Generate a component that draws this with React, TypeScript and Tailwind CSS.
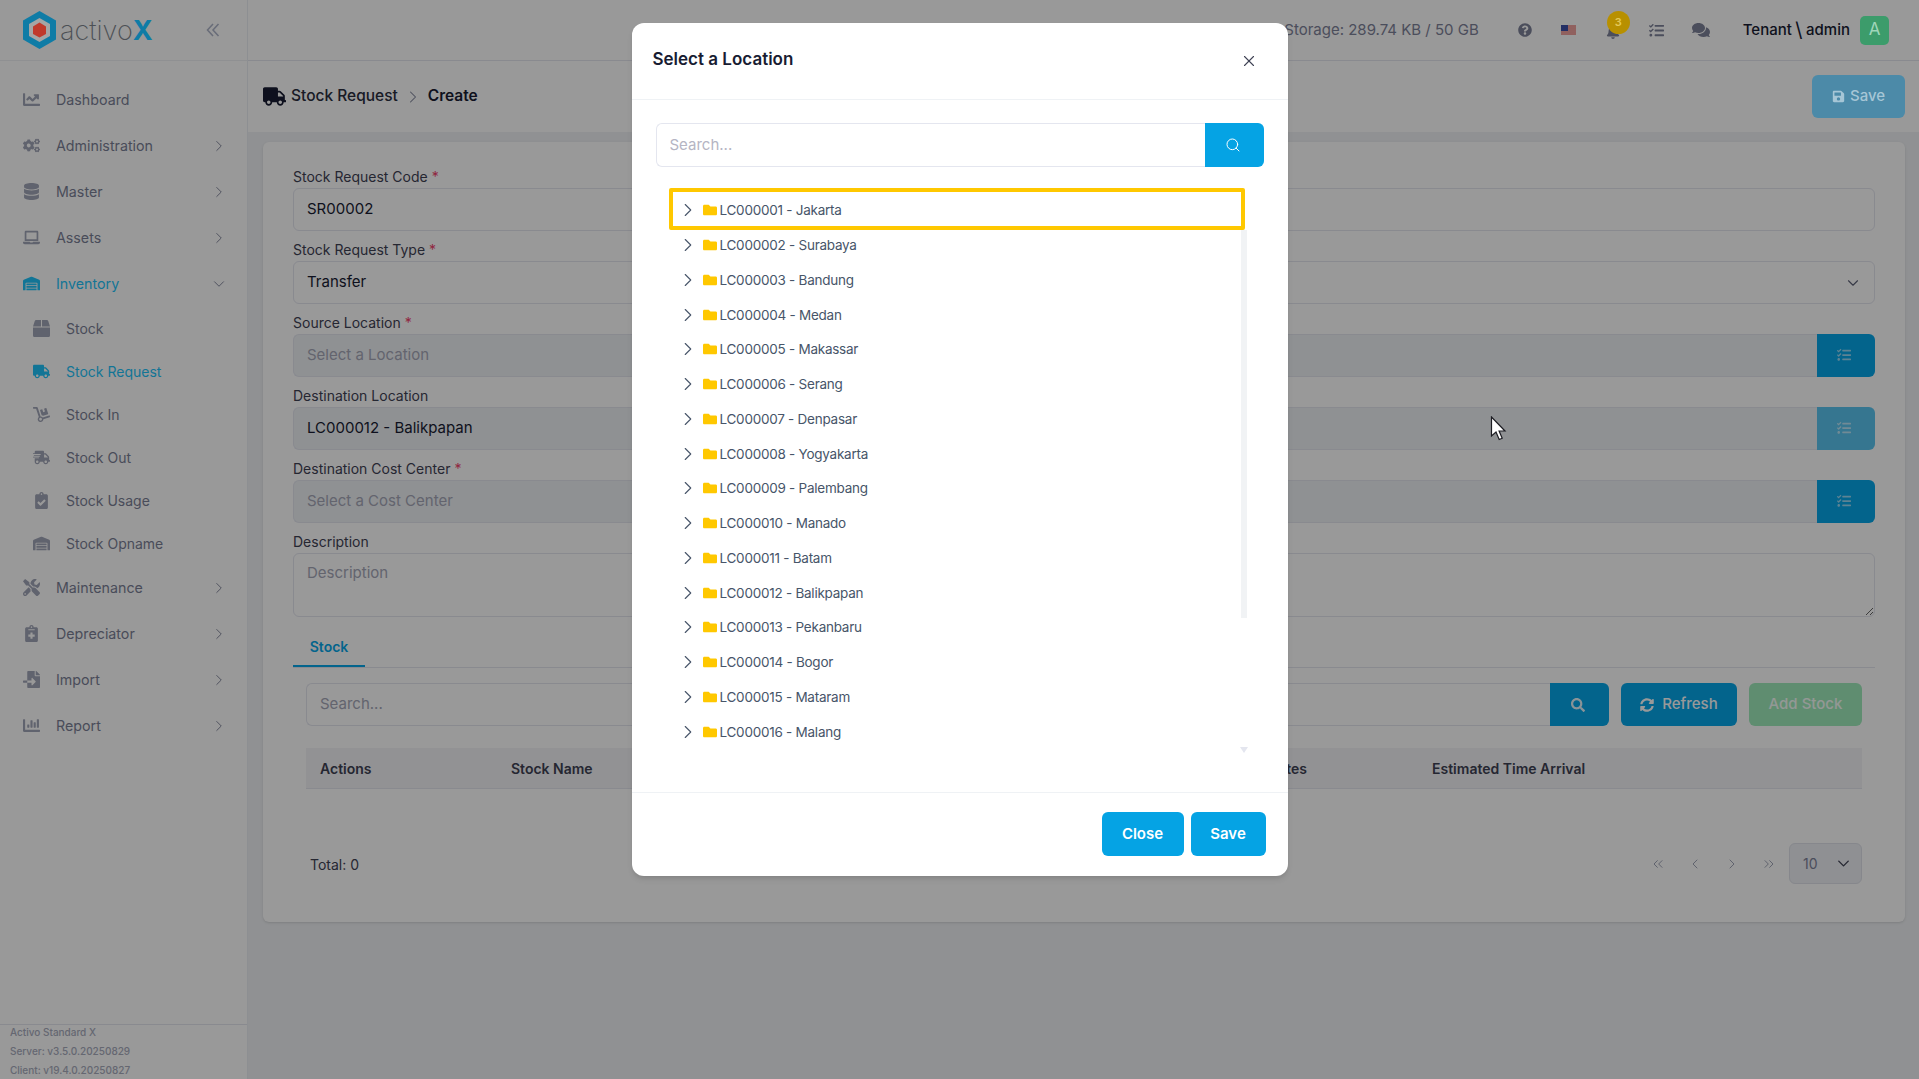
import { ChevronDown, ChevronRight, ChevronLeft, ChevronsLeft, ChevronsRight, Search, X } from 'lucide-react'
import {
  FaBell,
  FaBox,
  FaChartBar,
  FaChartLine,
  FaClipboardCheck,
  FaCogs,
  FaComments,
  FaDatabase,
  FaDolly,
  FaFileImport,
  FaFolder,
  FaLaptop,
  FaNotesMedical,
  FaQuestionCircle,
  FaSave,
  FaSearch,
  FaShippingFast,
  FaSyncAlt,
  FaTasks,
  FaTools,
  FaTruck,
  FaWarehouse,
} from 'react-icons/fa'
import type { IconType } from 'react-icons'

const locations = [
  'LC000001 - Jakarta',
  'LC000002 - Surabaya',
  'LC000003 - Bandung',
  'LC000004 - Medan',
  'LC000005 - Makassar',
  'LC000006 - Serang',
  'LC000007 - Denpasar',
  'LC000008 - Yogyakarta',
  'LC000009 - Palembang',
  'LC000010 - Manado',
  'LC000011 - Batam',
  'LC000012 - Balikpapan',
  'LC000013 - Pekanbaru',
  'LC000014 - Bogor',
  'LC000015 - Mataram',
  'LC000016 - Malang',
]

function MenuItem({ icon: Icon, label, open, active }: { icon: IconType; label: string; open?: boolean; active?: boolean }) {
  return (
    <div className={`flex h-[46px] items-center pl-[23px] pr-[19px] text-[14.25px] ${active ? 'text-[#1ec4fa]' : 'text-[#7b7f96]'}`}>
      <span className={`flex w-[33px] shrink-0 ${active ? '' : 'text-[#a1a5b7]'}`}>
        <Icon className="h-[17px] w-auto" />
      </span>
      <span className="flex-1">{label}</span>
      {open === undefined ? null : open ? (
        <ChevronDown size={18} strokeWidth={1.25} className="text-[#7e8299]" />
      ) : (
        <ChevronRight size={18} strokeWidth={1.25} className="text-[#7e8299]" />
      )}
    </div>
  )
}

function SubItem({ icon: Icon, label, active }: { icon: IconType; label: string; active?: boolean }) {
  return (
    <div className={`flex h-[43px] items-center pl-[33px] text-[14px] ${active ? 'text-[#1ec4fa]' : 'text-[#7b7f96]'}`}>
      <span className={`flex w-[33px] shrink-0 ${active ? '' : 'text-[#a1a5b7]'}`}>
        <Icon className="h-[17px] w-auto" />
      </span>
      <span>{label}</span>
    </div>
  )
}

function Sidebar() {
  return (
    <aside className="flex w-[248px] shrink-0 flex-col border-r border-[#eceef3] bg-white">
      <div className="relative z-20 flex h-[61px] items-center border-b border-[#8f9092] bg-[#999999] pl-[23px]">
        <svg width="33" height="38" viewBox="0 0 33 38">
          <polygon points="16.5,0 33,9.5 33,28.5 16.5,38 0,28.5 0,9.5" fill="#0f7ca6" />
          <polygon points="16.5,7 27,13 27,25 16.5,31 6,25 6,13" fill="#a5a5a5" />
          <polygon points="16.5,11.5 23,15.5 23,23 16.5,26.5 10,23 10,15.5" fill="#c0392b" />
        </svg>
        <span className="ml-[4px] text-[27px] font-extralight leading-none text-[#4c5055]">activo</span>
        <span className="text-[27px] font-bold leading-none text-[#0f7ca6]">X</span>
        <svg className="absolute left-[206px] top-[23px]" width="14" height="14" viewBox="0 0 14 14" fill="none" stroke="#686c78" strokeWidth="1.5">
          <path d="M7 1 1.5 7 7 13M12.5 1 7 7l5.5 6" />
        </svg>
      </div>
      <nav className="pt-[15.5px]">
        <MenuItem icon={FaChartLine} label="Dashboard" />
        <MenuItem icon={FaCogs} label="Administration" open={false} />
        <MenuItem icon={FaDatabase} label="Master" open={false} />
        <MenuItem icon={FaLaptop} label="Assets" open={false} />
        <MenuItem icon={FaWarehouse} label="Inventory" open active />
        <SubItem icon={FaBox} label="Stock" />
        <SubItem icon={FaTruck} label="Stock Request" active />
        <SubItem icon={FaDolly} label="Stock In" />
        <SubItem icon={FaShippingFast} label="Stock Out" />
        <SubItem icon={FaClipboardCheck} label="Stock Usage" />
        <SubItem icon={FaWarehouse} label="Stock Opname" />
        <MenuItem icon={FaTools} label="Maintenance" open={false} />
        <MenuItem icon={FaNotesMedical} label="Depreciator" open={false} />
        <MenuItem icon={FaFileImport} label="Import" open={false} />
        <MenuItem icon={FaChartBar} label="Report" open={false} />
      </nav>
      <div className="mt-auto h-[55px] border-t border-[#e4e6ef] pl-[10px] text-[10px] font-medium leading-[19px] text-[#a8acbd]">
        <div className="-mt-[2px]">Activo Standard X</div>
        <div>Server: v3.5.0.20250829</div>
        <div>Client: v19.4.0.20250827</div>
      </div>
    </aside>
  )
}

function Header() {
  const iconBox = 'flex w-[44px] items-center justify-center text-[#7e8299]'
  return (
    <header className="flex h-[61px] shrink-0 items-center justify-end border-b border-[#e4e6ef] bg-white pr-[30px]">
      <span className="mr-[24px] text-[15px] text-[#7e8299]">Storage: 289.74 KB / 50 GB</span>
      <div className={iconBox}>
        <FaQuestionCircle size={14} />
      </div>
      <div className={iconBox}>
        <svg width="15" height="11" viewBox="0 0 15 11">
          <rect width="15" height="11" fill="#fff" />
          <path d="M0 1h15M0 3h15M0 5h15M0 7h15M0 9h15" stroke="#e2453c" strokeWidth="1" />
          <rect width="7" height="6" fill="#3d4fa8" />
        </svg>
      </div>
      <div className={`${iconBox} relative`}>
        <FaBell size={14} className="mt-[4px]" />
        <span className="absolute -top-[10px] left-[16px] z-20 flex h-[23px] w-[23px] items-center justify-center rounded-full bg-[#b89000] text-[11px] font-semibold text-[#e3c95a]">
          3
        </span>
      </div>
      <div className={iconBox}>
        <FaTasks size={15} />
      </div>
      <div className={iconBox}>
        <FaComments size={18} />
      </div>
      <span className="ml-[20px] flex items-center text-[15px] font-medium text-[#181c32]">
        Tenant<span className="mx-[3.5px] text-[20px] font-normal leading-none">\</span>admin
      </span>
      <span className="relative z-20 ml-[10px] flex h-[29px] w-[29px] items-center justify-center rounded-[5px] bg-[#3c9c6b] text-[17px] text-[#9fd6ba]">
        A
      </span>
    </header>
  )
}

function Field({ label, required, children }: { label: string; required?: boolean; children: React.ReactNode }) {
  return (
    <div className="mb-[9px]">
      <label className="block h-[21px] text-[14px] leading-[20px] text-[#3f4254]">
        {label}
        {required && <span className="ml-[4px] text-[#f1416c]">*</span>}
      </label>
      {children}
    </div>
  )
}

function PickerInput({ value, placeholder, faded }: { value?: string; placeholder: string; faded?: boolean }) {
  return (
    <div className="flex h-[43px]">
      <input
        readOnly
        value={value ?? ''}
        placeholder={placeholder}
        className="min-w-0 flex-1 rounded-l-[6px] border border-r-0 border-[#e4e6ef] bg-[#eff2f5] px-[13px] pb-[1px] text-[15px] text-[#181c32] outline-none placeholder:text-[#a5a7b8]"
      />
      <button className={`flex w-[58px] items-center justify-center rounded-r-[6px] bg-[#05a7ea] text-white ${faded ? 'opacity-65' : ''}`}>
        <FaTasks size={14} className="-ml-[5px] -mt-[2px] opacity-60" />
      </button>
    </div>
  )
}

function StockRequestForm() {
  return (
    <div className="ml-[15px] mr-[14px] mt-[10px] rounded-[6px] bg-white px-[30px] pb-[38px] pt-[25px] shadow-sm">
      <Field label="Stock Request Code" required>
        <input readOnly value="SR00002" className="h-[43px] w-full rounded-[6px] border border-[#e4e6ef] px-[13px] pb-[3px] text-[15px] text-[#181c32] outline-none" />
      </Field>
      <Field label="Stock Request Type" required>
        <div className="flex h-[43px] items-center justify-between rounded-[6px] border border-[#e4e6ef] pl-[13px] pr-[12px] text-[15px] text-[#181c32]">
          <span>Transfer</span>
          <ChevronDown size={18} strokeWidth={1.5} className="text-[#5e6278]" />
        </div>
      </Field>
      <Field label="Source Location" required>
        <PickerInput placeholder="Select a Location" />
      </Field>
      <Field label="Destination Location">
        <PickerInput value="LC000012 - Balikpapan" placeholder="" faded />
      </Field>
      <Field label="Destination Cost Center" required>
        <PickerInput placeholder="Select a Cost Center" />
      </Field>
      <div>
        <label className="block h-[21px] text-[14px] leading-[20px] text-[#3f4254]">Description</label>
        <textarea
          readOnly
          placeholder="Description"
          className="block h-[64px] w-full resize-y rounded-[6px] border border-[#e4e6ef] px-[13px] py-[8px] text-[15px] outline-none placeholder:text-[#a5a7b8]"
        />
      </div>

      <div className="mt-[10px] flex h-[41px] border-b border-[#e4e6ef]">
        <div className="flex w-[72px] items-center justify-center border-b-2 border-[#05a7ea] pt-[1px] text-[14px] font-semibold text-[#05a7ea]">Stock</div>
      </div>

      <div className="px-[13px]">
        <div className="mt-[15px] flex h-[43px]">
          <input
            readOnly
            placeholder="Search..."
            className="min-w-0 flex-1 rounded-l-[6px] border border-r-0 border-[#e4e6ef] px-[13px] text-[15px] outline-none placeholder:text-[#a5a7b8]"
          />
          <button className="flex w-[59px] items-center justify-center rounded-r-[6px] bg-[#05a7ea] text-white">
            <FaSearch size={14} className="-ml-[4px] opacity-90" />
          </button>
          <button className="ml-[12px] flex w-[116px] items-center justify-center gap-[8px] rounded-[6px] bg-[#05a7ea] text-[15px] font-medium text-white">
            <FaSyncAlt size={14} />
            Refresh
          </button>
          <button className="ml-[12px] w-[113px] rounded-[6px] bg-[#9eebbb] text-[15px] font-medium text-white/90">Add Stock</button>
        </div>

        <div className="mt-[22px] grid h-[41px] grid-cols-[191px_756px_165px_1fr] items-center border-b border-[#e4e6ef] bg-[#f3f4f7] pl-[14px] text-[14px] font-semibold text-[#3f4254]">
          <span>Actions</span>
          <span>Stock Name</span>
          <span>Notes</span>
          <span>Estimated Time Arrival</span>
        </div>

        <div className="mt-[54px] flex h-[41px] items-center">
          <span className="ml-[4px] flex-1 pt-[2px] text-[14px] text-[#3f4254]">Total: 0</span>
          <div className="flex items-center gap-[21px] text-[#a1a5b7]">
            <ChevronsLeft size={16} strokeWidth={1.5} />
            <ChevronLeft size={16} strokeWidth={1.5} />
            <ChevronRight size={16} strokeWidth={1.5} />
            <ChevronsRight size={16} strokeWidth={1.5} />
          </div>
          <div className="ml-[12px] flex h-[41px] w-[73px] items-center justify-between rounded-[6px] border border-[#dfe2ea] bg-[#eef0f5] pl-[13px] pr-[8px] text-[14px] text-[#7e8299]">
            <span>10</span>
            <ChevronDown size={19} strokeWidth={1.75} className="text-[#3f4254]" />
          </div>
        </div>
      </div>
    </div>
  )
}

function LocationModal() {
  return (
    <div className="absolute inset-0 z-30 flex justify-center pt-[23px]">
      <div className="flex h-[853px] w-[656px] flex-col rounded-[12px] bg-white shadow-md">
        <div className="flex h-[77px] shrink-0 items-center justify-between border-b border-[#eff2f5] pl-[21px] pr-[30px]">
          <h2 className="-mt-[2px] text-[17px] font-semibold text-[#181c32]">Select a Location</h2>
          <X size={18} strokeWidth={1.5} className="text-[#3f4254]" />
        </div>
        <div className="flex-1 px-[24px] pt-[23px]">
          <div className="flex h-[44px]">
            <input
              readOnly
              placeholder="Search..."
              className="min-w-0 flex-1 rounded-l-[6px] border border-r-0 border-[#e4e6ef] px-[13px] text-[15px] outline-none placeholder:text-[#b5b5c3]"
            />
            <button className="flex w-[59px] items-center justify-center rounded-r-[6px] bg-[#05a3e4] text-white">
              <Search size={16} strokeWidth={1.5} className="-ml-[3px]" />
            </button>
          </div>
          <div className="relative ml-[13px] mt-[26px] w-[578px]">
            <div className="absolute -top-[5px] left-0 z-10 h-[42px] w-[576px] rounded-[2px] border-[4px] border-[#ffc800]" />
            <div className="absolute right-0 top-[37px] h-[388px] w-[6px] bg-[#f1f3f5]" />
            <div className="absolute right-[-1px] top-[554px] h-0 w-0 border-x-[4px] border-t-[6px] border-x-transparent border-t-[#e4e6ef]" />
            {locations.map((name) => (
              <div key={name} className="flex h-[34.75px] items-center pl-[8px] text-[13.5px] tracking-[-0.25px] text-[#475569]">
                <ChevronRight size={22} strokeWidth={1.2} className="shrink-0" />
                <FaFolder className="ml-[4px] h-[14px] w-[14px] shrink-0 text-[#ffc800]" />
                <span className="ml-[3px]">{name}</span>
              </div>
            ))}
          </div>
        </div>
        <div className="flex h-[84px] shrink-0 items-center justify-end gap-[7px] border-t border-[#eff2f5] pb-[1px] pr-[22px]">
          <button className="h-[44px] w-[82px] rounded-[6px] bg-[#05a3e4] text-[15px] font-semibold text-white">Close</button>
          <button className="h-[44px] w-[75px] rounded-[6px] bg-[#05a3e4] text-[15px] font-semibold text-white">Save</button>
        </div>
      </div>
    </div>
  )
}

export default function App() {
  return (
    <div className="relative flex h-screen w-full overflow-hidden bg-[#f0f2f5] font-[Inter,sans-serif]">
      <Sidebar />
      <div className="flex min-w-0 flex-1 flex-col">
        <Header />
        <div className="flex h-[71px] shrink-0 items-center bg-white pl-[15px] pr-[14px]">
          <FaTruck size={23} className="text-[#181c32]" />
          <span className="ml-[5px] -mt-[2px] text-[15.5px] font-medium text-[#2a2d3e]">Stock Request</span>
          <ChevronRight size={20} strokeWidth={1.25} className="mx-[5px] text-[#7e8299]" />
          <span className="-mt-[2px] text-[15.5px] font-semibold text-[#181c32]">Create</span>
          <button className="relative z-20 ml-auto flex h-[43px] w-[93px] items-center justify-center gap-[5px] rounded-[6px] bg-[#4c8aa8] text-[15px] font-medium text-[#a6c6d6]">
            <FaSave size={13} />
            Save
          </button>
        </div>
        <StockRequestForm />
      </div>

      {/* backdrop, modal and pointer sit over the page */}
      <div className="absolute inset-0 z-10 bg-black/40" />
      <LocationModal />
      <svg className="absolute left-[1490px] top-[416px] z-40" width="18" height="26" viewBox="0 0 18 26">
        <path d="M1.5 1v19l4.5-4 3.2 7.5 3-1.3-3.1-7.2H15z" fill="#fff" stroke="#1c1c22" strokeWidth="1.2" />
      </svg>
    </div>
  )
}
